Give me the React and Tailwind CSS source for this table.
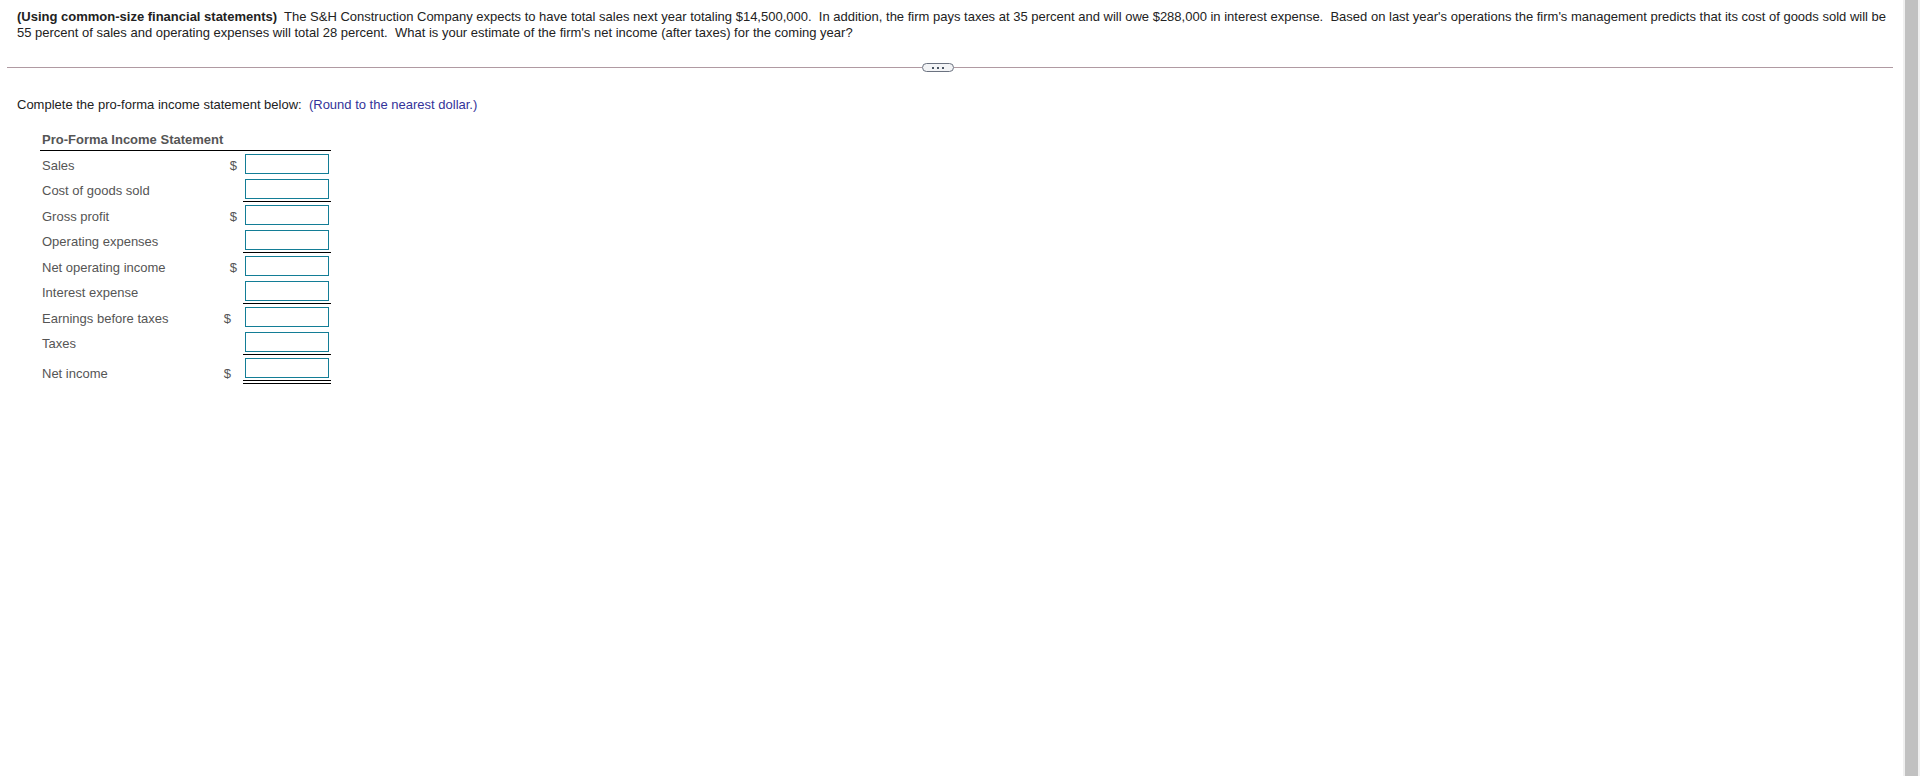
import React from 'react';

const rows = [
  { label: 'Sales', dollar: 'pr-[6px]', line: 'none' },
  { label: 'Cost of goods sold', line: 'single' },
  { label: 'Gross profit', dollar: 'pr-[6px]', line: 'none' },
  { label: 'Operating expenses', line: 'single' },
  { label: 'Net operating income', dollar: 'pr-[6px]', line: 'none' },
  { label: 'Interest expense', line: 'single' },
  { label: 'Earnings before taxes', dollar: 'pr-[12px]', line: 'none' },
  { label: 'Taxes', line: 'single' },
  { label: 'Net income', dollar: 'pr-[12px]', line: 'double' },
];

const cellClass = {
  none: 'w-[88px] px-[2px] pt-[3px] pb-[2px]',
  single: 'w-[88px] px-[2px] pt-[3px] pb-[2px] border-b border-black',
  double: 'w-[88px] px-[2px] pt-[3px] pb-[2px] border-b-4 border-double border-black',
};

const StatementRow = ({ row }) => {
  const low = row.line === 'double';
  return (
    <div className="flex items-start">
      <div className={low ? 'flex-1 pl-[2px] pt-[11px] leading-4' : 'flex-1 pl-[2px] pt-[7px] leading-4'}>
        {row.label}
      </div>
      <div
        className={
          (low ? 'w-[24px] pt-[11px] leading-4 text-right ' : 'w-[24px] pt-[7px] leading-4 text-right ') +
          (row.dollar || '')
        }
      >
        {row.dollar ? '$' : ''}
      </div>
      <div className={cellClass[row.line]}>
        <input
          type="text"
          aria-label={row.label}
          className="block w-[84px] h-[20px] border border-[#137d96] bg-white px-1 text-[13px] outline-none"
        />
      </div>
    </div>
  );
};

const App = () => {
  return (
    <div className="flex h-[776px] overflow-hidden bg-white font-['Liberation_Sans',Arial,sans-serif] text-[13px]">
      <div className="flex-1">
        <p className="pl-[17px] pr-[10px] pt-[9px] leading-4 text-[#222]">
          <b>(Using common-size financial statements)</b>
          {'\u00a0 The S&H Construction Company expects to have total sales next year totaling $14,500,000.\u00a0 In addition, the firm pays taxes at 35 percent and will owe $288,000 in interest expense.\u00a0 Based on last year\'s operations the firm\'s management predicts that its cost of goods sold will be 55 percent of sales and operating expenses will total 28 percent.\u00a0 What is your estimate of the firm\'s net income (after taxes) for the coming year?'}
        </p>

        <div className="ml-[7px] mr-[10px] mt-[22px] flex h-[9px] items-center">
          <div className="w-[915px] border-t border-[#b09aa2]" />
          <button className="flex h-[9px] w-[32px] items-center justify-center gap-[3px] rounded-full border border-[#6b7280] bg-[#f3f4f6]">
            <span className="h-[2px] w-[2px] bg-[#4b5563]" />
            <span className="h-[2px] w-[2px] bg-[#4b5563]" />
            <span className="h-[2px] w-[2px] bg-[#4b5563]" />
          </button>
          <div className="flex-1 border-t border-[#b09aa2]" />
        </div>

        <p className="mt-[25px] pl-[17px] leading-4 text-[#222]">
          Complete the pro-forma income statement below:{'\u00a0 '}
          <span className="text-[#333399]">(Round to the nearest dollar.)</span>
        </p>

        <div className="ml-[40px] mt-[19px] w-[291px] text-[#555]">
          <div className="border-b border-black pb-[2px] pl-[2px] font-bold leading-4">
            Pro-Forma Income Statement
          </div>
          {rows.map((row) => (
            <StatementRow key={row.label} row={row} />
          ))}
        </div>
      </div>

      <div className="flex w-[17px] justify-center bg-[#f0f0f0]">
        <div className="h-full w-[13px] bg-[#c1c1c1]" />
      </div>
    </div>
  );
};

export default App;
